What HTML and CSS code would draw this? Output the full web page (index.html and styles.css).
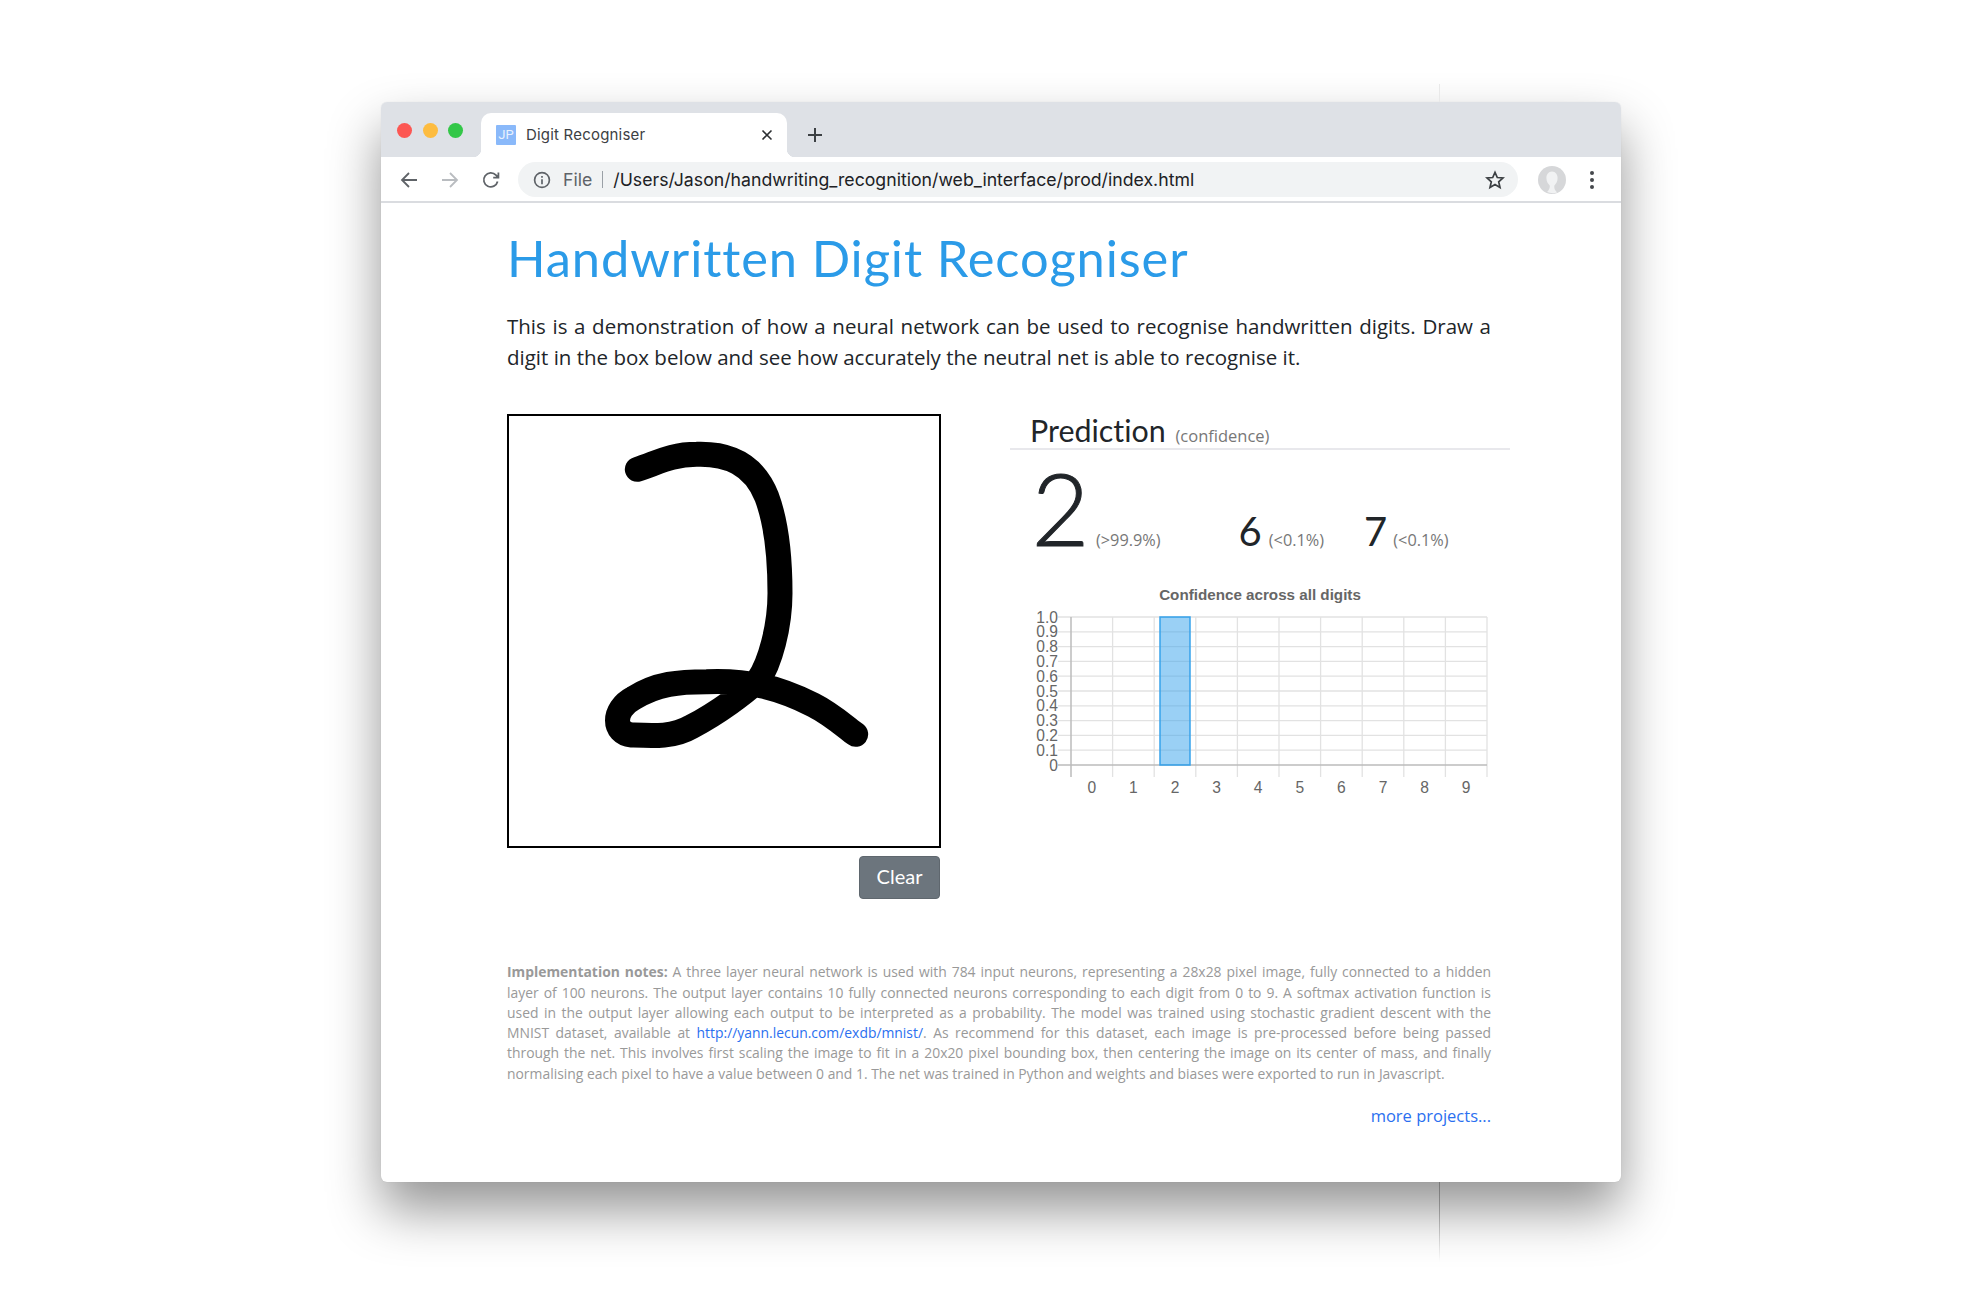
FILE: index.html
```html
<!DOCTYPE html>
<html lang="en">
<head>
	<meta charset="UTF-8">
	<meta name="viewport" content="width=device-width, initial-scale=1.0">
	<title>Digit Recogniser</title>
	<link rel="stylesheet" href="styles.css">
</head>
<body>
	<div class="seam seam-top"></div>
	<div class="seam seam-bottom"></div>

	<div class="window">
		<div class="tabstrip">
			<div class="lights">
				<span class="light red"></span>
				<span class="light yellow"></span>
				<span class="light green"></span>
			</div>
			<div class="tab">
				<span class="favicon">JP</span>
				<span class="tab-title">Digit Recogniser</span>
				<svg class="tab-close" width="12" height="12" viewBox="0 0 12 12"><path d="M1.5 1.5l9 9M10.5 1.5l-9 9"/></svg>
			</div>
			<svg class="new-tab" width="16" height="16" viewBox="0 0 16 16"><path d="M8 1v14M1 8h14"/></svg>
		</div>

		<div class="toolbar">
			<svg class="nav-icon" width="18" height="18" viewBox="0 0 18 18"><path d="M17 9H2M9 2L2 9l7 7"/></svg>
			<svg class="nav-icon faded" width="18" height="18" viewBox="0 0 18 18"><path d="M1 9h15M9 2l7 7-7 7"/></svg>
			<svg class="nav-icon" width="18" height="18" viewBox="0 0 18 18"><path d="M15.6 10.5A7 7 0 1 1 14 4.2L16 6.4M16.4 1.4v5.2h-5.2"/></svg>
			<div class="omnibox">
				<svg class="info" width="18" height="18" viewBox="0 0 18 18">
					<circle cx="9" cy="9" r="7.4"/>
					<path d="M9 8.2v5M9 5v1.8"/>
				</svg>
				<span class="scheme">File</span>
				<span class="url">/Users/Jason/handwriting_recognition/web_interface/prod/index.html</span>
				<svg class="star" width="20" height="20" viewBox="0 0 20 20"><path d="M10 2.3l2.3 5.2 5.7.5-4.3 3.8 1.3 5.6-5-3-5 3 1.3-5.6L2 8l5.7-.5z"/></svg>
			</div>
			<svg class="avatar" width="28" height="28" viewBox="0 0 28 28">
				<circle cx="14" cy="14" r="14" fill="#d6d7d9"/>
				<path d="M14 5.5c-3.6 0-5.6 3-5.6 6.6 0 3.6 1.7 6 3.3 7.3.5 2-.6 4.4-2.6 6.6a14 14 0 0 0 10 .4c-2.4-2.2-3.2-4.8-2.7-7 1.6-1.3 3.2-3.7 3.2-7.3 0-3.6-2-6.6-5.6-6.6z" fill="#f1f2f3"/>
			</svg>
			<div class="kebab"><i></i><i></i><i></i></div>
		</div>

		<div class="page">
			<h1>Handwritten Digit Recogniser</h1>
			<p class="intro">This is a demonstration of how a neural network can be used to recognise handwritten digits. Draw a digit in the box below and see how accurately the neutral net is able to recognise it.</p>

			<div class="columns">
				<div class="draw-col">
					<div class="canvas">
						<svg width="430" height="430" viewBox="27 48 1290 1290">
							<path class="ink" d="M412 208C470 190 510 163 590 163C680 160 760 190 800 290C830 370 840 480 840 580C840 680 810 790 775 840C735 878 655 938 575 980C520 1012 460 1008 395 1005C340 1000 335 930 400 895C470 850 540 845 620 845C740 840 830 860 940 915C990 940 1030 975 1067 1003"/>
						</svg>
					</div>
					<button class="clear">Clear</button>
				</div>

				<div class="result-col">
					<div class="result-head">Prediction <small>(confidence)</small></div>
					<div class="guesses">
						<div class="guess guess-top">2<small>(&gt;99.9%)</small></div>
						<div class="guess guess-second">6<small>(&lt;0.1%)</small></div>
						<div class="guess guess-third">7<small>(&lt;0.1%)</small></div>
					</div>
					<div class="chart-title">Confidence across all digits</div>
					<svg class="chart" width="500" height="200" viewBox="0 0 500 200">
						<path class="grid" d="M48 12H477M48 26.8H477M48 41.6H477M48 56.4H477M48 71.2H477M48 86H477M48 100.8H477M48 115.6H477M48 130.4H477M48 145.2H477"/>
						<path class="grid" d="M102.6 12V172M144.2 12V172M185.8 12V172M227.4 12V172M269 12V172M310.6 12V172M352.2 12V172M393.8 12V172M435.4 12V172M477 12V172"/>
						<path class="axis" d="M61 12V172M48 160H477"/>
						<rect class="bar" x="150" y="12" width="30" height="148"/>
						<g class="ylabels">
							<text x="48" y="12">1.0</text>
							<text x="48" y="26.8">0.9</text>
							<text x="48" y="41.6">0.8</text>
							<text x="48" y="56.4">0.7</text>
							<text x="48" y="71.2">0.6</text>
							<text x="48" y="86">0.5</text>
							<text x="48" y="100.8">0.4</text>
							<text x="48" y="115.6">0.3</text>
							<text x="48" y="130.4">0.2</text>
							<text x="48" y="145.2">0.1</text>
							<text x="48" y="160">0</text>
						</g>
						<g class="xlabels">
							<text x="81.8" y="188">0</text>
							<text x="123.4" y="188">1</text>
							<text x="165" y="188">2</text>
							<text x="206.6" y="188">3</text>
							<text x="248.2" y="188">4</text>
							<text x="289.8" y="188">5</text>
							<text x="331.4" y="188">6</text>
							<text x="373" y="188">7</text>
							<text x="414.6" y="188">8</text>
							<text x="456.2" y="188">9</text>
						</g>
					</svg>
				</div>
			</div>

			<p class="notes"><b>Implementation notes:</b> A three layer neural network is used with 784 input neurons, representing a 28x28 pixel image, fully connected to a hidden layer of 100 neurons. The output layer contains 10 fully connected neurons corresponding to each digit from 0 to 9. A softmax activation function is used in the output layer allowing each output to be interpreted as a probability. The model was trained using stochastic gradient descent with the MNIST dataset, available at <a href="#">http://yann.lecun.com/exdb/mnist/</a>. As recommend for this dataset, each image is pre-processed before being passed through the net. This involves first scaling the image to fit in a 20x20 pixel bounding box, then centering the image on its center of mass, and finally normalising each pixel to have a value between 0 and 1. The net was trained in Python and weights and biases were exported to run in Javascript.</p>
			<a class="more" href="#">more projects...</a>
		</div>
	</div>
</body>
</html>
```

FILE: styles.css
```css
*,
*::before,
*::after {
	box-sizing: border-box;
	padding: 0;
	margin: 0;
}
body {
	height: 1299px;
	padding: 102px 0 0 381px;
	background: #fff;
	overflow: hidden;
	font-family: "Open Sans", sans-serif;
}

/* the faint line behind the window */
.seam {
	position: absolute;
	left: 1439px;
	width: 1px;
}
.seam-top {
	top: 84px;
	height: 18px;
	background: #e9e9e9;
}
.seam-bottom {
	top: 1182px;
	height: 80px;
	background: linear-gradient(#777, rgba(200, 200, 200, 0));
	z-index: 1;
}

.window {
	width: 1240px;
	height: 1080px;
	background: #fff;
	border-radius: 6px;
	overflow: hidden;
	box-shadow: 0 28px 52px rgba(0, 0, 0, 0.42), 0 0 1px rgba(0, 0, 0, 0.15);
}

/* browser chrome */
.tabstrip {
	height: 55px;
	background: #dee1e6;
	display: flex;
	align-items: flex-end;
	padding-left: 16px;
}
.lights {
	display: flex;
	gap: 10.5px;
	align-self: flex-start;
	padding-top: 21px;
}
.light {
	width: 15px;
	height: 15px;
	border-radius: 50%;
}
.red { background: #fc5753; }
.yellow { background: #fdbc40; }
.green { background: #33c748; }

.tab {
	position: relative;
	width: 306px;
	height: 44px;
	margin-left: 18px;
	padding: 0 14px 0 15px;
	background: #fff;
	border-radius: 10px 10px 0 0;
	display: flex;
	align-items: center;
}
.tab::before,
.tab::after {
	content: "";
	position: absolute;
	bottom: 0;
	width: 8px;
	height: 8px;
}
.tab::before {
	left: -8px;
	background: radial-gradient(circle at 0 0, transparent 8px, #fff 8.5px);
}
.tab::after {
	right: -8px;
	background: radial-gradient(circle at 100% 0, transparent 8px, #fff 8.5px);
}
.favicon {
	width: 20px;
	height: 20px;
	background: #8ab9fa;
	border-radius: 1px;
	color: #e8f1fe;
	font: 13px/20px "Roboto", sans-serif;
	text-align: center;
}
.tab-title {
	margin: 0 0 1px 10px;
	flex: 1;
	font: 15px "Inter", "Roboto", sans-serif;
	color: #3c4043;
	letter-spacing: 0.2px;
}
.tab-close {
	fill: none;
	stroke: #2d3033;
	stroke-width: 1.6;
}
.new-tab {
	margin: 0 0 14px 20px;
	fill: none;
	stroke: #3c4043;
	stroke-width: 2;
}

.toolbar {
	height: 46px;
	border-bottom: 2px solid #dadce0;
	display: flex;
	align-items: center;
	padding: 1px 0 0 19px;
}
.nav-icon {
	margin-right: 23px;
	fill: none;
	stroke: #5f6368;
	stroke-width: 1.8;
}
.nav-icon.faded {
	stroke: #b9bcc0;
}
.omnibox {
	width: 1000px;
	height: 35px;
	margin-left: -5px;
	padding: 0 13px 0 15px;
	background: #f1f3f4;
	border-radius: 18px;
	display: flex;
	align-items: center;
	font: 17.7px "Inter", "Roboto", sans-serif;
}
.info {
	fill: none;
	stroke: #5f6368;
	stroke-width: 1.7;
}
.scheme {
	margin-left: 12px;
	padding-right: 11px;
	color: #5f6368;
	position: relative;
}
.scheme::after {
	content: "";
	position: absolute;
	right: 0;
	top: 2px;
	bottom: 2px;
	width: 1px;
	background: #9aa0a6;
}
.url {
	margin-left: 10px;
	flex: 1;
	color: #202124;
}
.star {
	fill: none;
	stroke: #3c4043;
	stroke-width: 1.7;
}
.avatar {
	margin-left: 19.5px;
}
.kebab {
	margin-left: 24.5px;
	display: flex;
	flex-direction: column;
	gap: 3px;
}
.kebab i {
	width: 4px;
	height: 4px;
	border-radius: 50%;
	background: #45484c;
}

/* page itself */
.page {
	padding: 0 130px 0 126px;
}
h1 {
	margin-top: 25px;
	font: 400 50.6px/1.2 "Lato", sans-serif;
	font-variant-ligatures: none;
	letter-spacing: 0.9px;
	color: #2b9be8;
}
.intro {
	margin-top: 22px;
	font-size: 20.5px;
	line-height: 30.8px;
	color: #212529;
	text-align: justify;
}
.columns {
	display: flex;
	margin-top: 42px;
	height: 485px;
}
.draw-col {
	width: 434px;
	display: flex;
	flex-direction: column;
	align-items: flex-end;
}
.canvas {
	width: 434px;
	height: 434px;
	border: 2px solid #000;
	background: #fff;
}
.canvas svg {
	display: block;
}
.ink {
	fill: none;
	stroke: #000;
	stroke-width: 75;
	stroke-linecap: round;
	stroke-linejoin: round;
}
.clear {
	width: 81px;
	height: 43px;
	margin: 8px 1px 0 0;
	padding-bottom: 3px;
	border: 1px solid #5f676e;
	border-radius: 4px;
	background: #6c757d;
	color: #fff;
	font: 20px "Lato", sans-serif;
}
.result-col {
	width: 500px;
	margin-left: 69px;
}
.result-head {
	height: 36px;
	padding-left: 20px;
	border-bottom: 2px solid #e8e8ec;
	font: 30.4px/32px "Lato", sans-serif;
	font-variant-ligatures: none;
	color: #212529;
}
.result-head small {
	margin-left: 2px;
	font: 16.5px "Open Sans", sans-serif;
	color: #777;
}
.guesses {
	height: 120px;
	display: flex;
	align-items: baseline;
}
.guess {
	font-family: "Lato", sans-serif;
	font-weight: 400;
	color: #212529;
	line-height: 1;
}
.guess small {
	font: 16.3px "Open Sans", sans-serif;
	color: #777;
	-webkit-text-stroke: 0;
}
.guess-top {
	margin-left: 21.5px;
	margin-top: 6.5px;
	font-size: 100px;
	font-weight: 300;
	-webkit-text-stroke: 1px #212529;
}
.guess-top small {
	margin-left: 6.5px;
}
.guess-second {
	margin-left: 78px;
	font-size: 40px;
}
.guess-second small {
	margin-left: 7px;
}
.guess-third {
	margin-left: 40px;
	font-size: 40px;
}
.guess-third small {
	margin-left: 6px;
}
.chart-title {
	margin-top: 15.5px;
	text-align: center;
	font: bold 15.2px "Liberation Sans", sans-serif;
	color: #666;
}
.chart {
	display: block;
	margin-top: 2.5px;
}
.grid {
	stroke: #e2e2e2;
	stroke-width: 1.3;
	fill: none;
}
.axis {
	stroke: #bcbcbc;
	stroke-width: 1.5;
	fill: none;
}
.bar {
	fill: rgba(54, 162, 235, 0.5);
	stroke: #36a2eb;
	stroke-width: 1.5;
}
.ylabels text,
.xlabels text {
	font: 15.6px "Liberation Sans", sans-serif;
	fill: #666;
}
.ylabels text {
	text-anchor: end;
	dominant-baseline: central;
}
.xlabels text {
	text-anchor: middle;
}
.notes {
	margin-top: 63px;
	font-size: 13.9px;
	line-height: 20.3px;
	color: #999;
	text-align: justify;
}
.notes a,
.more {
	color: #2a6ff0;
	text-decoration: none;
}
.more {
	display: block;
	margin-top: 20px;
	text-align: right;
	font-size: 16.5px;
}
```
